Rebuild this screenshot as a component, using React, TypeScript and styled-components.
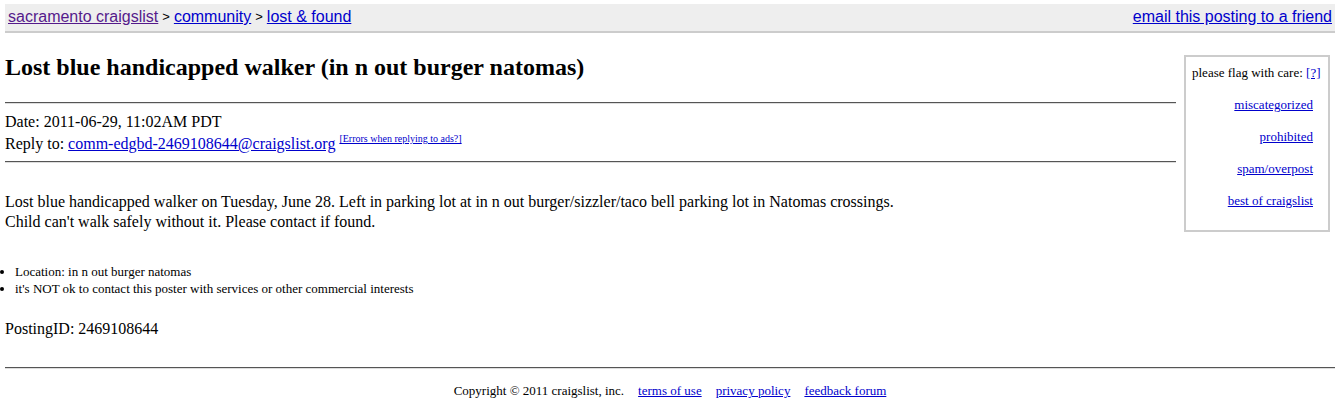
import React from "react";
import styled, { createGlobalStyle } from "styled-components";

const Global = createGlobalStyle`
  html, body { margin: 0; padding: 0; background: #fff; }
  body {
    padding: 4px 5px 0 5px;
    font-family: "Liberation Serif", "Times New Roman", serif;
    font-size: 16px;
    color: #000;
  }
  a { color: #00c; }
  a:visited { color: #551a8b; }
`;

const Header = styled.div`
  display: flex;
  justify-content: space-between;
  align-items: center;
  background: #eee;
  border-bottom: 2px solid #ccc;
  padding: 3px 3px 4px 3px;
  font-family: "Liberation Sans", Arial, sans-serif;
  font-size: 16px;
  line-height: 20px;
`;

const Crumbs = styled.div`
  display: flex;
  gap: 4px;
  align-items: center;
`;

const Sep = styled.span`
  font-size: 13px;
`;

const HeadLink = styled.a<{ $visited?: boolean }>`
  color: ${(p) => (p.$visited ? "#551a8b" : "#00c")};
`;

const Main = styled.div`
  display: flex;
  gap: 8px;
  align-items: flex-start;
  padding-right: 5px;
`;

const Content = styled.div`
  flex: 1;
  min-width: 0;
`;

const Title = styled.h2`
  font-size: 24px;
  font-weight: bold;
  margin: 20px 0 21px 0;
  line-height: 28px;
`;

const Rule = styled.hr`
  border: 0;
  border-top: 1px solid #555;
  border-bottom: 1px solid #ddd;
  margin: 0;
  height: 0;
`;

const Meta = styled.div`
  padding: 7px 0 6px 0;
  line-height: 22px;
`;

const Small = styled.sup`
  font-size: 10px;
  margin-left: 4px;
  vertical-align: 7px;
  line-height: 0;
`;

const Body = styled.div`
  margin-top: 29px;
  line-height: 20px;
  font-size: 16px;
`;

const Bullets = styled.ul`
  margin: 31px 0 0 0;
  padding: 0 0 0 10px;
  font-size: 13px;
  line-height: 17px;
  list-style: disc;
`;

const PostingId = styled.div`
  margin-top: 22px;
  font-size: 16px;
  line-height: 20px;
`;

const Flags = styled.div`
  box-sizing: border-box;
  width: 146px;
  border: 2px solid #ccc;
  margin-top: 22px;
  padding: 8px 15px 21px 6px;
  font-size: 13px;
  line-height: 16px;
  display: flex;
  flex-direction: column;
  align-items: flex-end;
  gap: 16px;
`;

const FlagHead = styled.div`
  align-self: flex-start;
  white-space: nowrap;
`;

const Footer = styled.div`
  margin-top: 28px;
`;

const FooterLine = styled.div`
  display: flex;
  justify-content: center;
  gap: 14px;
  font-size: 13px;
  padding: 14px 0 6px 0;
  line-height: 16px;
`;

export default function App() {
  return (
    <>
      <Global />
      <Header>
        <Crumbs>
          <HeadLink href="#" $visited>sacramento craigslist</HeadLink>
          <Sep>&gt;</Sep>
          <HeadLink href="#">community</HeadLink>
          <Sep>&gt;</Sep>
          <HeadLink href="#">lost &amp; found</HeadLink>
        </Crumbs>
        <HeadLink href="#">email this posting to a friend</HeadLink>
      </Header>
      <Main>
        <Content>
          <Title>Lost blue handicapped walker (in n out burger natomas)</Title>
          <Rule />
          <Meta>
            Date: 2011-06-29, 11:02AM PDT
            <br />
            Reply to: <a href="#">comm-edgbd-2469108644@craigslist.org</a>
            <Small>
              <a href="#">[Errors when replying to ads?]</a>
            </Small>
          </Meta>
          <Rule />
          <Body>
            Lost blue handicapped walker on Tuesday, June 28. Left in parking lot at in n out burger/sizzler/taco bell parking lot in Natomas crossings.
            <br />
            Child can't walk safely without it. Please contact if found.
          </Body>
          <Bullets>
            <li>Location: in n out burger natomas</li>
            <li>it's NOT ok to contact this poster with services or other commercial interests</li>
          </Bullets>
          <PostingId>PostingID: 2469108644</PostingId>
        </Content>
        <Flags>
          <FlagHead>
            please flag with care: <a href="#">[?]</a>
          </FlagHead>
          <a href="#">miscategorized</a>
          <a href="#">prohibited</a>
          <a href="#">spam/overpost</a>
          <a href="#">best of craigslist</a>
        </Flags>
      </Main>
      <Footer>
        <Rule />
        <FooterLine>
          <span>Copyright © 2011 craigslist, inc.</span>
          <a href="#">terms of use</a>
          <a href="#">privacy policy</a>
          <a href="#">feedback forum</a>
        </FooterLine>
      </Footer>
    </>
  );
}
